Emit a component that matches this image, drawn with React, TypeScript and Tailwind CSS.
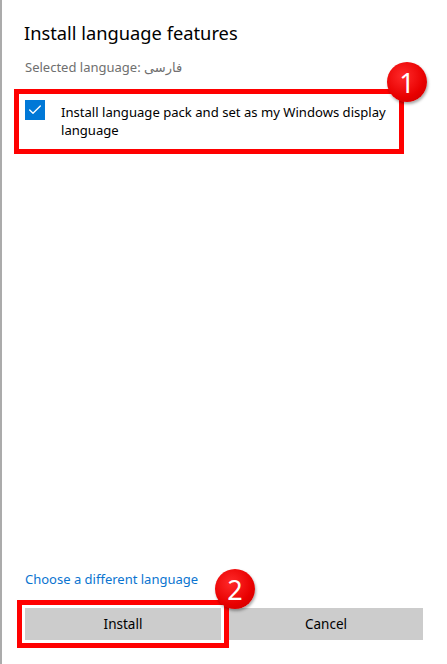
import { Check } from "lucide-react"

function Badge({ n, className }: { n: string; className: string }) {
  return (
    <div
      className={`absolute flex h-10 w-10 items-center justify-center rounded-full bg-[radial-gradient(circle_at_40%_35%,#ff2a2a_0%,#e80000_60%,#c40000_100%)] text-[27px] leading-none text-white shadow-[1px_2px_3px_rgba(0,0,0,0.35)] ${className}`}
    >
      {n}
    </div>
  )
}

export default function App() {
  return (
    <div className="flex h-[664px] w-[447px] flex-col border-l-2 border-[#ababab] bg-white font-['Noto_Sans','Open_Sans',sans-serif] text-[#1a1a1a]">
      <h1 className="ml-[22px] mt-[20px] text-[18.3px] leading-[26px] font-normal text-black">Install language features</h1>
      <p className="ml-[23px] mt-[12px] text-[13px] leading-[18px] text-[#6f6f6f]">
        Selected language: <span className="font-['Noto_Sans','DejaVu_Sans',sans-serif]">فارسی</span>
      </p>

      <div className="relative ml-[12px] mt-[13px] flex h-[65px] w-[390px] items-start gap-[16px] border-[5px] border-[#ff0000] pl-[6px] pt-[6px]">
        <div className="flex h-5 w-5 shrink-0 items-center justify-center bg-[#0078d7]">
          <Check className="h-4 w-4 text-white" strokeWidth={2} />
        </div>
        <p className="pt-[3px] text-[13.1px] leading-[18px] text-black">
          Install language pack and set as my Windows display language
        </p>
        <Badge n="1" className="right-[-28px] top-[-32px]" />
      </div>

      <div className="flex-1" />

      <a className="ml-[23px] text-[13px] leading-[18px] text-[#0a74d0]">Choose a different language</a>

      <div className="mb-[16px] ml-[15px] mt-[12px] flex items-center">
        <div className="relative border-[5px] border-[#ff0000] px-[3px] pb-[3px] pt-[3px]">
          <button className="h-8 w-[196px] bg-[#cccccc] text-[13.5px] text-black">Install</button>
          <Badge n="2" className="left-[193px] top-[-36px]" />
        </div>
        <button className="h-8 w-[194px] bg-[#cccccc] text-[13.5px] text-black">Cancel</button>
      </div>
    </div>
  )
}
